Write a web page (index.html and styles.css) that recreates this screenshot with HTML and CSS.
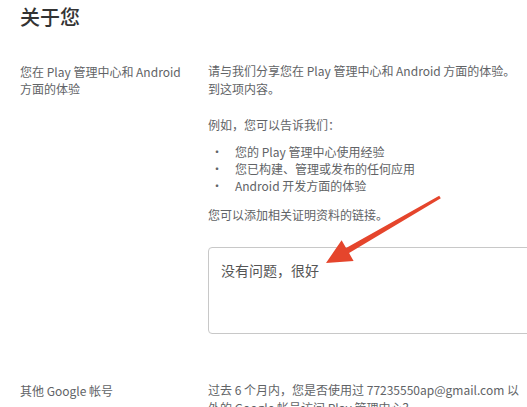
FILE: index.html
```html
<!DOCTYPE html>
<html lang="zh-CN">
<head>
  <meta charset="UTF-8">
  <title>关于您</title>
  <link rel="stylesheet" href="styles.css">
</head>
<body>

  <h1 class="page-title">关于您</h1>

  <div class="form-row">
    <div class="row-label">您在 Play 管理中心和 Android<br>方面的体验</div>
    <div class="row-body">
      <p class="para-first">请与我们分享您在 Play 管理中心和 Android 方面的体验。<br>到这项内容。</p>
      <p class="para-example">例如，您可以告诉我们：</p>
      <ul class="tips">
        <li>您的 Play 管理中心使用经验</li>
        <li>您已构建、管理或发布的任何应用</li>
        <li>Android 开发方面的体验</li>
      </ul>
      <p class="para-links">您可以添加相关证明资料的链接。</p>
      <div class="answer-box">没有问题，很好</div>
    </div>
  </div>

  <div class="form-row form-row-second">
    <div class="row-label">其他 Google 帐号</div>
    <div class="row-body">
      <p class="para-first">过去 6 个月内，您是否使用过 77235550ap@gmail.com 以<br>外的 Google 帐号访问 Play 管理中心？</p>
    </div>
  </div>

  <svg class="annotation-arrow" width="527" height="407" viewBox="0 0 527 407">
    <polygon fill="#e5452c" points="440.8,198.3 349.1,253.1 353.6,261.0 326,263 341.6,240.2 346.1,247.9 439.2,195.7"/>
  </svg>

</body>
</html>
```

FILE: styles.css
```css
body {
  margin: 0;
  padding: 0 0 0 20px;
  background: #fff;
  font-family: "Noto Sans CJK SC", "Noto Sans", sans-serif;
  color: #616366;
  font-size: 12px;
  overflow: hidden;
  position: relative;
  width: 620px;
  height: 407px;
}

.page-title {
  margin: 0 0 31px;
  padding-top: 3px;
  font-size: 20px;
  line-height: 28px;
  font-weight: 500;
  color: #333;
}

.form-row {
  display: grid;
  grid-template-columns: 188px 380px;
}

.form-row-second {
  margin-top: 47px;
}

.row-label {
  line-height: 17px;
  padding-top: 1px;
  white-space: nowrap;
}

.row-body p {
  margin: 0;
  line-height: 18px;
  white-space: nowrap;
}

.para-example {
  margin-top: 18px !important;
}

.tips {
  list-style: none;
  margin: 9px 0 0;
  padding: 0;
}

.tips li {
  display: flex;
  line-height: 17px;
}

.tips li::before {
  content: "•";
  width: 27px;
  padding-left: 3px;
  box-sizing: border-box;
  flex-shrink: 0;
}

.para-links {
  margin-top: 12px !important;
}

.answer-box {
  margin-top: 23px;
  height: 87px;
  box-sizing: border-box;
  border: 1px solid #c8c8c8;
  border-radius: 4px;
  padding: 12px 12px;
  font-size: 14px;
  line-height: 20px;
  color: #555;
}

.annotation-arrow {
  position: absolute;
  top: 0;
  left: 0;
}
```
